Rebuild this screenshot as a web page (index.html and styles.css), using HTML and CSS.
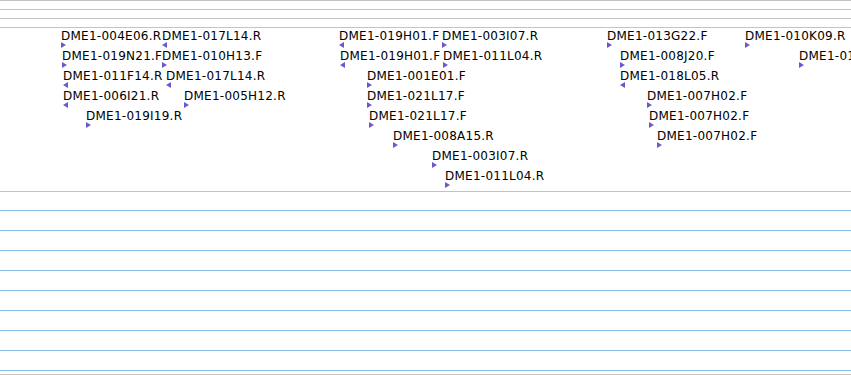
FILE: index.html
```
<!DOCTYPE html>
<html>
<head>
    <meta charset="utf-8" />
    <title>Clone track</title>
    <link rel="stylesheet" href="styles.css">
</head>
<body>
    <div class="ruler">
        <div class="ruler-row"></div>
        <div class="ruler-row"></div>
        <div class="ruler-row"></div>
    </div>

    <div class="track" id="track"></div>

    <div class="lanes">
        <div class="lane"></div>
        <div class="lane"></div>
        <div class="lane"></div>
        <div class="lane"></div>
        <div class="lane"></div>
        <div class="lane"></div>
        <div class="lane"></div>
        <div class="lane"></div>
        <div class="lane"></div>
    </div>

    <script type="text/javascript">
        // x, row, strand, name
        var feats = [
            [61, 0, "+", "DME1-004E06.R"],
            [162, 0, "-", "DME1-017L14.R"],
            [62, 1, "+", "DME1-019N21.F"],
            [162, 1, "+", "DME1-010H13.F"],
            [63, 2, "-", "DME1-011F14.R"],
            [166, 2, "-", "DME1-017L14.R"],
            [63, 3, "-", "DME1-006I21.R"],
            [184, 3, "+", "DME1-005H12.R"],
            [86, 4, "+", "DME1-019I19.R"],

            [339, 0, "-", "DME1-019H01.F"],
            [442, 0, "+", "DME1-003I07.R"],
            [340, 1, "-", "DME1-019H01.F"],
            [443, 1, "+", "DME1-011L04.R"],
            [367, 2, "+", "DME1-001E01.F"],
            [367, 3, "+", "DME1-021L17.F"],
            [369, 4, "+", "DME1-021L17.F"],
            [393, 5, "+", "DME1-008A15.R"],
            [432, 6, "+", "DME1-003I07.R"],
            [445, 7, "+", "DME1-011L04.R"],

            [607, 0, "+", "DME1-013G22.F"],
            [745, 0, "+", "DME1-010K09.R"],
            [620, 1, "+", "DME1-008J20.F"],
            [799, 1, "+", "DME1-010K09.F"],
            [620, 2, "-", "DME1-018L05.R"],
            [647, 3, "+", "DME1-007H02.F"],
            [649, 4, "+", "DME1-007H02.F"],
            [657, 5, "+", "DME1-007H02.F"]
        ];

        var track = document.getElementById("track");
        var fwd = '<svg class="arrow" width="6" height="6" viewBox="0 0 6 6"><polygon points="0,0 5,3 0,6" /></svg>';
        var rev = '<svg class="arrow" width="6" height="6" viewBox="0 0 6 6"><polygon points="5,0 0,3 5,6" /></svg>';

        for (var i = 0; i < feats.length; i++) {
            var f = feats[i];
            var el = document.createElement("div");
            el.className = "feat";
            el.style.left = f[0] + "px";
            el.style.top = (1 + f[1] * 20) + "px";
            el.innerHTML = '<div class="label">' + f[3] + '</div>' + (f[2] == "+" ? fwd : rev);
            track.appendChild(el);
        }
    </script>
</body>
</html>
```

FILE: styles.css
```
body {
    margin: 0;
    padding: 0;
    width: 851px;
    height: 375px;
    overflow: hidden;
    background: #fff;
    font-family: "DejaVu Sans", sans-serif;
    font-size: 12px;
    color: #000;
}

.ruler {
    border-top: 1px solid #c4c4c4;
}

.ruler-row {
    height: 8px;
    border-bottom: 1px solid #c4c4c4;
}

.track {
    position: relative;
    height: 163px;
    border-bottom: 1px solid #c4c4c4;
}

.feat {
    position: absolute;
    white-space: nowrap;
}

.label {
    line-height: 15px;
    height: 13px;
    letter-spacing: 0.25px;
}

.arrow {
    display: block;
    fill: #6a5acd;
}

.lanes {
    padding-top: 18px;
}

.lane {
    height: 19px;
    border-top: 1px solid #88bfe8;
}

.lane:last-child {
    height: 3px;
    border-bottom: 1px solid #c4c4c4;
}
```
